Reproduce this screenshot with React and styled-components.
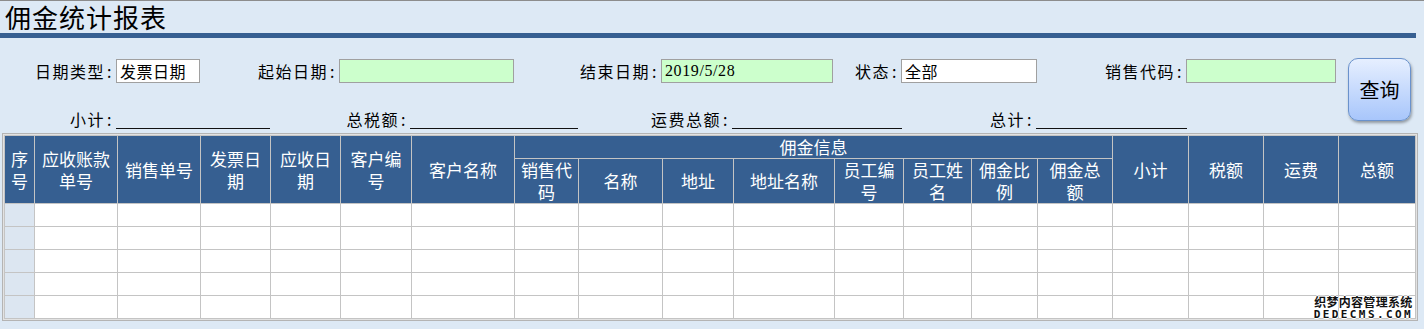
import React from 'react'
import styled, { createGlobalStyle } from 'styled-components'

const GlobalStyle = createGlobalStyle`
  html, body { margin: 0; padding: 0; background: #dde9f5; }
  * { box-sizing: border-box; }
`

const CJK = `"Noto Sans CJK SC", "Noto Sans", sans-serif`

const Page = styled.div`
  position: relative;
  height: 329px;
  overflow: hidden;
  background: #dde9f5;
  border-top: 1px solid #8c8c8c;
  font-family: ${CJK};
  color: #000;
`

const Title = styled.h1`
  margin: 0;
  height: 32px;
  line-height: 32px;
  padding-left: 5px;
  font-size: 26px;
  font-weight: 400;
  letter-spacing: 1px;
  white-space: nowrap;
`

const Bar = styled.div`
  width: 1416px;
  height: 5px;
  background: #365f91;
`

const Filters = styled.div`
  display: flex;
  align-items: flex-start;
  padding-top: 20px;
`

const FieldColumn = styled.div`
  display: flex;
  flex-direction: column;
`

const FieldRow = styled.div`
  display: flex;
  align-items: ${p => (p.$bottom ? 'flex-end' : 'center')};
  margin-top: ${p => p.$top}px;
  height: ${p => p.$h}px;
`

const Field = styled.div`
  display: flex;
  align-items: ${p => (p.$bottom ? 'flex-end' : 'center')};
  margin-left: ${p => p.$gap}px;
`

const Label = styled.span`
  width: ${p => p.$w}px;
  margin-right: 3px;
  text-align: right;
  font-size: 16px;
  line-height: 20px;
  letter-spacing: 1.5px;
  white-space: nowrap;
`

const Colon = styled.span`
  margin-left: 2px;
`

const Input = styled.div`
  width: ${p => p.$w}px;
  height: 24px;
  border: 1px solid #a0a0a0;
  background: ${p => (p.$green ? '#ccffcc' : '#ffffff')};
  padding-left: 3px;
  font-size: 16px;
  line-height: 22px;
  letter-spacing: ${p => (p.$latin ? '0.6px' : '0.5px')};
  font-family: ${p => (p.$latin ? `"Liberation Serif", ${CJK}` : CJK)};
  white-space: nowrap;
`

const Total = styled.div`
  width: ${p => p.$w}px;
  height: 19px;
  border-bottom: 1px solid #111;
`

const QueryButton = styled.button`
  margin-left: 12px;
  margin-top: 0;
  width: 63px;
  height: 63px;
  border: 1px solid #6a92cc;
  border-radius: 10px;
  background: linear-gradient(#e6efff, #a8c6fb);
  box-shadow: 1px 2px 3px rgba(0, 0, 0, 0.35);
  font-family: ${CJK};
  font-size: 20px;
  color: #000;
  padding: 0;
`

const Frame = styled.div`
  margin: 4px 0 0 2px;
  width: 1416px;
  border: 1px solid #b4b4b4;
  padding: 1px;
  background: #e2e2e2;
`

const Grid = styled.table`
  border-collapse: collapse;
  table-layout: fixed;
  width: 1412px;
`

const Head = styled.th`
  background: #365f91;
  color: #fff;
  border: 1px solid #c4c4c4;
  font-size: 17px;
  font-weight: 400;
  line-height: 22px;
  padding: 0;
  text-align: center;
  vertical-align: middle;
  white-space: nowrap;
  overflow: hidden;
`

const HeadRow = styled.tr`
  height: ${p => p.$h}px;
`

const BodyRow = styled.tr`
  height: 23px;
`

const Cell = styled.td`
  border: 1px solid #c4c4c4;
  background: ${p => (p.$index ? '#dce6f1' : '#ffffff')};
  padding: 0;
`

const Watermark = styled.div`
  position: absolute;
  right: 11px;
  bottom: 8px;
  text-align: center;
  font-weight: 700;
  color: #111;
  text-shadow: 1px 0 #fff, -1px 0 #fff, 0 1px #fff, 0 -1px #fff;
  line-height: 13px;
`

const MarkCn = styled.div`
  font-size: 12px;
  letter-spacing: 0.3px;
  font-family: ${CJK};
`

const MarkEn = styled.div`
  font-size: 11px;
  letter-spacing: 2.4px;
  font-family: "DejaVu Sans Mono", monospace;
`

const widths = [30, 83, 83, 70, 70, 71, 103, 64, 84, 71, 101, 69, 68, 66, 75, 76, 75, 75, 77]

const lines = t => t.split('|').map((s, i) => (
  <React.Fragment key={i}>{i > 0 && <br />}{s}</React.Fragment>
))

const leftHeads = ['序|号', '应收账款|单号', '销售单号', '发票日|期', '应收日|期', '客户编|号', '客户名称']
const subHeads = ['销售代|码', '名称', '地址', '地址名称', '员工编|号', '员工姓|名', '佣金比|例', '佣金总|额']
const rightHeads = ['小计', '税额', '运费', '总额']

function FieldLabel({ w, children }) {
  return <Label $w={w}>{children}<Colon>:</Colon></Label>
}

export default function App() {
  return (
    <Page>
      <GlobalStyle />
      <Title>佣金统计报表</Title>
      <Bar />
      <Filters>
        <FieldColumn>
          <FieldRow $top={1} $h={24}>
            <Field $gap={35}><FieldLabel w={78}>日期类型</FieldLabel><Input $w={84}>发票日期</Input></Field>
            <Field $gap={56}><FieldLabel w={80}>起始日期</FieldLabel><Input $w={175} $green /></Field>
            <Field $gap={64}><FieldLabel w={80}>结束日期</FieldLabel><Input $w={172} $green $latin>2019/5/28</Input></Field>
            <Field $gap={20}><FieldLabel w={45}>状态</FieldLabel><Input $w={136}>全部</Input></Field>
            <Field $gap={65}><FieldLabel w={81}>销售代码</FieldLabel><Input $w={150} $green /></Field>
          </FieldRow>
          <FieldRow $top={26} $h={20} $bottom>
            <Field $gap={70} $bottom><FieldLabel w={43}>小计</FieldLabel><Total $w={154} /></Field>
            <Field $gap={76} $bottom><FieldLabel w={61}>总税额</FieldLabel><Total $w={168} /></Field>
            <Field $gap={70} $bottom><FieldLabel w={81}>运费总额</FieldLabel><Total $w={170} /></Field>
            <Field $gap={86} $bottom><FieldLabel w={45}>总计</FieldLabel><Total $w={151} /></Field>
          </FieldRow>
        </FieldColumn>
        <QueryButton>查询</QueryButton>
      </Filters>
      <Frame>
        <Grid>
          <colgroup>
            {widths.map((w, i) => <col key={i} style={{ width: w }} />)}
          </colgroup>
          <thead>
            <HeadRow $h={23}>
              {leftHeads.map(h => <Head key={h} rowSpan={2}>{lines(h)}</Head>)}
              <Head colSpan={8}>佣金信息</Head>
              {rightHeads.map(h => <Head key={h} rowSpan={2}>{h}</Head>)}
            </HeadRow>
            <HeadRow $h={45}>
              {subHeads.map(h => <Head key={h}>{lines(h)}</Head>)}
            </HeadRow>
          </thead>
          <tbody>
            {[0, 1, 2, 3, 4].map(r => (
              <BodyRow key={r}>
                {widths.map((_, c) => <Cell key={c} $index={c === 0} />)}
              </BodyRow>
            ))}
          </tbody>
        </Grid>
      </Frame>
      <Watermark>
        <MarkCn>织梦内容管理系统</MarkCn>
        <MarkEn>DEDECMS.COM</MarkEn>
      </Watermark>
    </Page>
  )
}
